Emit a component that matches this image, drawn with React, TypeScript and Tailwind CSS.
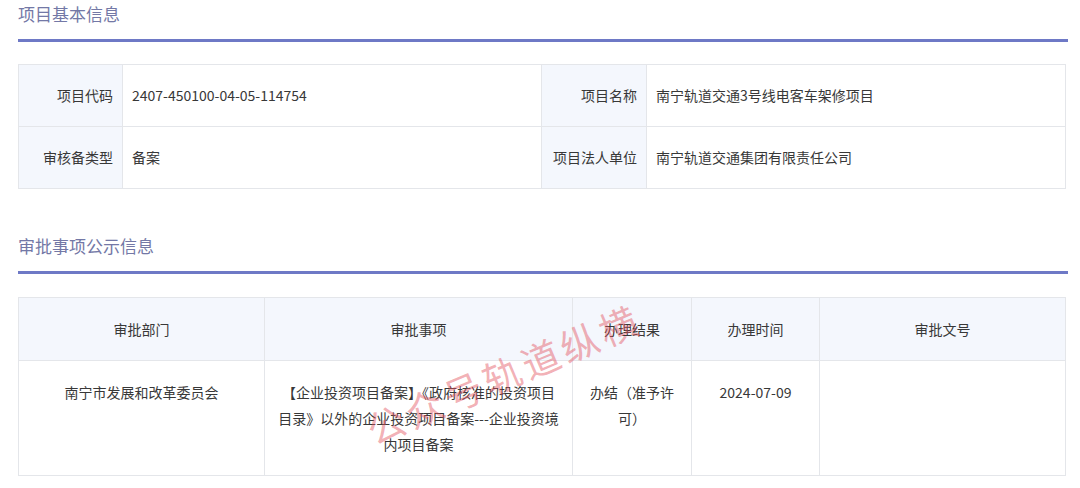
const font = { fontFamily: '"Noto Sans CJK SC", "Liberation Sans", sans-serif' };

function SectionTitle({ text }: { text: string }) {
  return (
    <div className="px-[18px]">
      <div className="h-[28px] flex items-center text-[17px] text-[#7378a6]">{text}</div>
      <div className="mt-[11px] h-[3px] bg-[#6e79c6] mr-[-6px]" />
    </div>
  );
}

export default function App() {
  return (
    <div className="relative w-[1080px] h-[488px] bg-white overflow-hidden text-[14px] text-[#383838]" style={font}>
      <SectionTitle text="项目基本信息" />

      {/* BASIC INFO */}
      <div className="mx-[18px] mt-[22px] w-[1048px] border border-[#e4e6ea]">
        <div className="grid grid-cols-[104px_419px_105px_1fr] h-[62px] border-b border-[#e4e6ea]">
          <div className="bg-[#f4f7fd] border-r border-[#e4e6ea] flex items-center justify-end pr-[9px]">项目代码</div>
          <div className="border-r border-[#e4e6ea] flex items-center pl-[9px]">2407-450100-04-05-114754</div>
          <div className="bg-[#f4f7fd] border-r border-[#e4e6ea] flex items-center justify-end pr-[9px]">项目名称</div>
          <div className="flex items-center pl-[9px]">南宁轨道交通3号线电客车架修项目</div>
        </div>
        <div className="grid grid-cols-[104px_419px_105px_1fr] h-[61px]">
          <div className="bg-[#f4f7fd] border-r border-[#e4e6ea] flex items-center justify-end pr-[9px]">审核备类型</div>
          <div className="border-r border-[#e4e6ea] flex items-center pl-[9px]">备案</div>
          <div className="bg-[#f4f7fd] border-r border-[#e4e6ea] flex items-center justify-end pr-[9px]">项目法人单位</div>
          <div className="flex items-center pl-[9px]">南宁轨道交通集团有限责任公司</div>
        </div>
      </div>

      <div className="mt-[43px]">
        <SectionTitle text="审批事项公示信息" />
      </div>

      {/* APPROVAL */}
      <div className="mx-[18px] mt-[23px] w-[1048px] border border-[#e4e6ea]">
        <div className="grid grid-cols-[246px_308px_119px_128px_1fr] h-[63px] bg-[#f4f7fd] border-b border-[#e4e6ea]">
          <div className="border-r border-[#e4e6ea] flex items-center justify-center">审批部门</div>
          <div className="border-r border-[#e4e6ea] flex items-center justify-center">审批事项</div>
          <div className="border-r border-[#e4e6ea] flex items-center justify-center">办理结果</div>
          <div className="border-r border-[#e4e6ea] flex items-center justify-center">办理时间</div>
          <div className="flex items-center justify-center">审批文号</div>
        </div>
        <div className="grid grid-cols-[246px_308px_119px_128px_1fr] h-[114px] leading-[26px]">
          <div className="border-r border-[#e4e6ea] text-center pt-[18px]">南宁市发展和改革委员会</div>
          <div className="border-r border-[#e4e6ea] text-center pt-[18px] px-[11px]">
            【企业投资项目备案】《政府核准的投资项目目录》以外的企业投资项目备案---企业投资境内项目备案
          </div>
          <div className="border-r border-[#e4e6ea] text-center pt-[18px] px-[16px]">办结（准予许可）</div>
          <div className="border-r border-[#e4e6ea] text-center pt-[18px]">2024-07-09</div>
          <div />
        </div>
      </div>

      {/* WATERMARK */}
      <div className="absolute left-[368px] top-[412px] h-[38px] leading-[38px] origin-left -rotate-[23deg] text-[38px] text-[#e2505c]/45 whitespace-nowrap tracking-[4px] pointer-events-none">
        公众号轨道纵横
      </div>
    </div>
  );
}
